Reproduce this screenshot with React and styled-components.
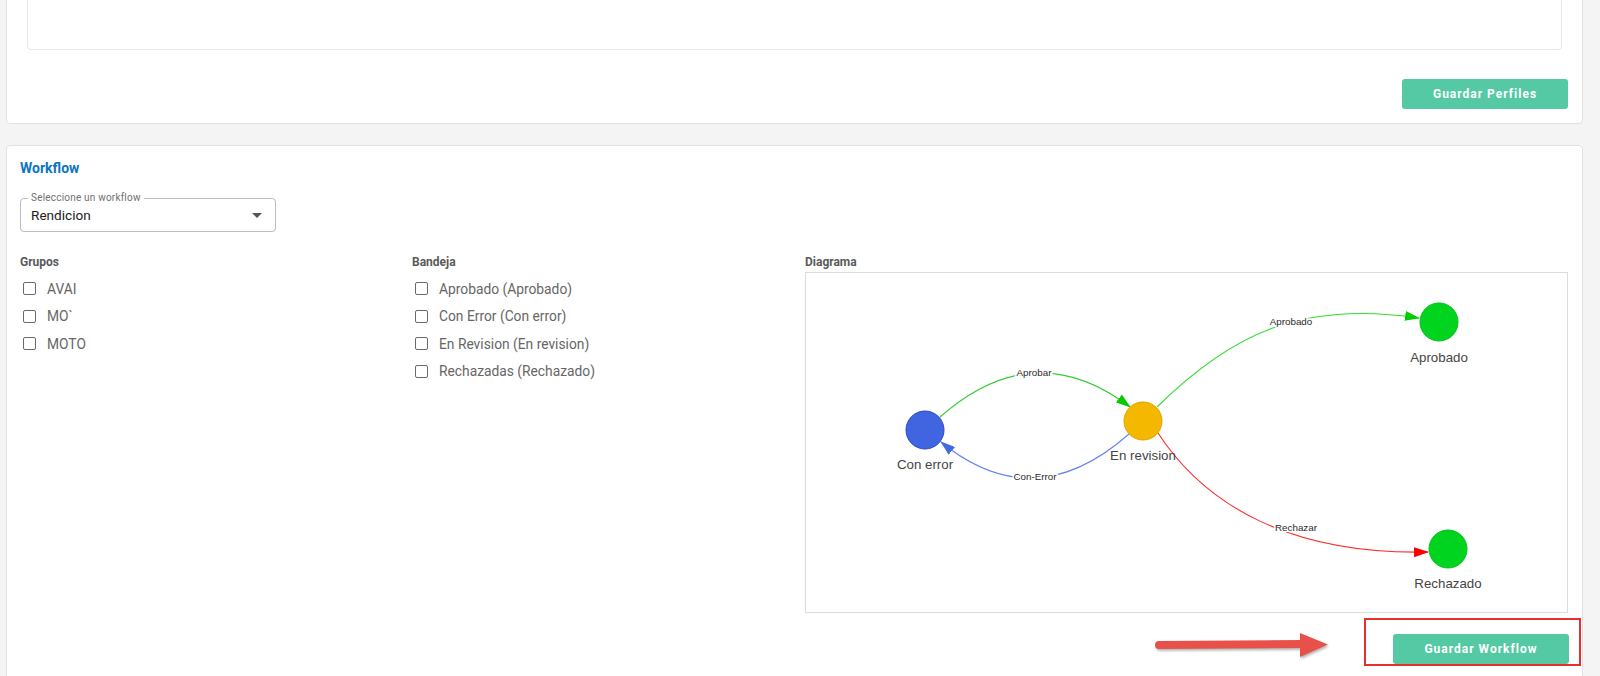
import React from "react";
import styled, { createGlobalStyle } from "styled-components";

const GlobalStyle = createGlobalStyle`
  html, body {
    margin: 0;
    padding: 0;
    background: #f4f4f4;
    overflow: hidden;
    font-family: Roboto, "Liberation Sans", Arial, sans-serif;
  }
  * { box-sizing: border-box; }
`;

const Page = styled.div`
  width: 1583px;
  padding-left: 6px;
  display: flex;
  flex-direction: column;
  gap: 21px;
`;

const Card = styled.section`
  background: #fff;
  border: 1px solid #e2e2e2;
  border-radius: 4px;
  display: flex;
  flex-direction: column;
  padding: ${(p) => p.$pad};
  margin-top: ${(p) => p.$mt || "0"};
`;

const InnerBox = styled.div`
  height: 129px;
  margin-right: 6px;
  border: 1px solid #e6e6e6;
  border-radius: 4px;
  background: #fff;
`;

const ButtonRow = styled.div`
  display: flex;
  justify-content: flex-end;
  margin-top: ${(p) => p.$mt || "0"};
`;

const PrimaryButton = styled.button`
  width: ${(p) => p.$w}px;
  height: 30px;
  border: none;
  border-radius: 3px;
  background: #54c9a4;
  color: #fff;
  font-family: Roboto, "Liberation Sans", Arial, sans-serif;
  font-size: 12px;
  font-weight: 700;
  letter-spacing: 1px;
  padding: 0;
  cursor: pointer;
`;

const Title = styled.h2`
  margin: 0;
  font-size: 14px;
  line-height: 20px;
  font-weight: 700;
  color: #0d74bf;
`;

const SelectBox = styled.div`
  position: relative;
  margin-top: 20px;
  width: 256px;
  height: 34px;
  border: 1px solid #bcbcbc;
  border-radius: 4px;
  display: flex;
  align-items: center;
  justify-content: space-between;
  padding: 0 13px 0 10px;
`;

const FloatLabel = styled.span`
  position: absolute;
  top: -7px;
  left: 7px;
  padding: 0 3px;
  background: #fff;
  font-size: 10px;
  line-height: 12px;
  color: #707070;
  letter-spacing: 0.02em;
`;

const SelectValue = styled.span`
  font-size: 13.6px;
  color: #222;
`;

const Columns = styled.div`
  margin-top: 22px;
  display: grid;
  grid-template-columns: 392px 393px 1fr;
`;

const Column = styled.div`
  display: flex;
  flex-direction: column;
`;

const ColLabel = styled.div`
  font-size: 12px;
  line-height: 16px;
  font-weight: 700;
  color: #5a5a5a;
`;

const CheckList = styled.div`
  margin-top: 5px;
  display: flex;
  flex-direction: column;
`;

const CheckRow = styled.label`
  height: 27.5px;
  display: flex;
  align-items: center;
  padding-left: 3px;
  gap: 11px;
  font-size: 13.8px;
  color: #666;
  cursor: pointer;
`;

const Box = styled.input`
  appearance: none;
  margin: 0;
  width: 13px;
  height: 13px;
  border: 1.5px solid #6a6a6a;
  border-radius: 2px;
  background: #fff;
`;

const DiagramBox = styled.div`
  margin-top: 2px;
  height: 341px;
  border: 1px solid #dcdcdc;
  background: #fff;
`;

const DiagramSvg = styled.svg`
  display: block;
  width: 100%;
  height: 100%;
`;

const Footer = styled.div`
  margin-top: 5px;
  margin-right: -13px;
  display: flex;
  justify-content: flex-end;
  align-items: flex-start;
  padding-bottom: 20px;
`;

const ArrowMark = styled.svg`
  margin-top: 12px;
  margin-right: 34px;
  filter: drop-shadow(1px 2px 1px rgba(0, 0, 0, 0.28));
`;

const Highlight = styled.div`
  border: 2px solid #e3312e;
  padding: 14px 10px 0 27px;
  display: flex;
`;

const Check = ({ label }) => (
  <CheckRow>
    <Box type="checkbox" />
    {label}
  </CheckRow>
);

const nodes = [
  { id: "ce", x: 925, y: 430, fill: "#4165e1", stroke: "#2448c8", label: "Con error", ly: 469 },
  { id: "er", x: 1143, y: 421, fill: "#f5b800", stroke: "#dca300", label: "En revision", ly: 460 },
  { id: "ap", x: 1439, y: 322, fill: "#00d41f", stroke: "#00bf1b", label: "Aprobado", ly: 362 },
  { id: "re", x: 1448, y: 549, fill: "#00d41f", stroke: "#00bf1b", label: "Rechazado", ly: 588 },
];

const edges = [
  { d: "M940,417 Q1034,334 1130,407", color: "#33cc33", m: "g", label: "Aprobar", lx: 1034, ly: 376 },
  { d: "M1129,434 Q1034,518 941,442", color: "#6482f0", m: "b", label: "Con-Error", lx: 1035, ly: 480 },
  { d: "M1157,407 C1230,335 1300,300 1419,318", color: "#33dd33", m: "g", label: "Aprobado", lx: 1291, ly: 325 },
  { d: "M1158,433 C1205,505 1290,555 1428,552", color: "#ff2a2a", m: "r", label: "Rechazar", lx: 1296, ly: 531 },
];

const markerColors = { g: "#00cc00", b: "#4169e1", r: "#ff0000" };

const Diagram = () => (
  <DiagramSvg viewBox="806 273 761 339" preserveAspectRatio="none">
    <defs>
      {Object.entries(markerColors).map(([k, c]) => (
        <marker
          key={k}
          id={`arrow-${k}`}
          markerUnits="userSpaceOnUse"
          markerWidth="15"
          markerHeight="10"
          refX="14"
          refY="5"
          orient="auto"
        >
          <path d="M0,0 L15,5 L0,10 z" fill={c} />
        </marker>
      ))}
    </defs>
    {edges.map((e) => (
      <path
        key={e.label}
        d={e.d}
        fill="none"
        stroke={e.color}
        strokeWidth="1.1"
        markerEnd={`url(#arrow-${e.m})`}
      />
    ))}
    {edges.map((e) => (
      <text
        key={e.label + "t"}
        x={e.lx}
        y={e.ly}
        textAnchor="middle"
        fontFamily='"Liberation Sans", Arial, sans-serif'
        fontSize="9.8"
        fill="#2a2a2a"
        stroke="#fff"
        strokeWidth="3"
        paintOrder="stroke"
      >
        {e.label}
      </text>
    ))}
    {nodes.map((n) => (
      <g key={n.id}>
        <circle cx={n.x} cy={n.y} r="19" fill={n.fill} stroke={n.stroke} strokeWidth="1" />
        <text
          x={n.x}
          y={n.ly}
          textAnchor="middle"
          fontFamily='"Liberation Sans", Arial, sans-serif'
          fontSize="13.3"
          fill="#444"
        >
          {n.label}
        </text>
      </g>
    ))}
  </DiagramSvg>
);

export default function App() {
  return (
    <>
      <GlobalStyle />
      <Page>
        <Card $pad="20px 14px 14px 20px" $mt="-100px">
          <InnerBox />
          <ButtonRow $mt="29px">
            <PrimaryButton $w={166}>Guardar Perfiles</PrimaryButton>
          </ButtonRow>
        </Card>

        <Card $pad="12px 14px 0 13px">
          <Title>Workflow</Title>
          <SelectBox>
            <FloatLabel>Seleccione un workflow</FloatLabel>
            <SelectValue>Rendicion</SelectValue>
            <svg width="10" height="5" viewBox="0 0 10 5">
              <path d="M0,0 L10,0 L5,5 z" fill="#555" />
            </svg>
          </SelectBox>

          <Columns>
            <Column>
              <ColLabel>Grupos</ColLabel>
              <CheckList>
                <Check label="AVAI" />
                <Check label="MO`" />
                <Check label="MOTO" />
              </CheckList>
            </Column>
            <Column>
              <ColLabel>Bandeja</ColLabel>
              <CheckList>
                <Check label="Aprobado (Aprobado)" />
                <Check label="Con Error (Con error)" />
                <Check label="En Revision (En revision)" />
                <Check label="Rechazadas (Rechazado)" />
              </CheckList>
            </Column>
            <Column>
              <ColLabel>Diagrama</ColLabel>
              <DiagramBox>
                <Diagram />
              </DiagramBox>
            </Column>
          </Columns>

          <Footer>
            <ArrowMark width="176" height="30" viewBox="0 0 176 30">
              <line x1="5" y1="15" x2="150" y2="14" stroke="#e8504a" strokeWidth="8" strokeLinecap="round" />
              <path d="M146,3 L174,14.5 L146,27 z" fill="#e8504a" />
            </ArrowMark>
            <Highlight>
              <PrimaryButton $w={176}>Guardar Workflow</PrimaryButton>
            </Highlight>
          </Footer>
        </Card>
      </Page>
    </>
  );
}
